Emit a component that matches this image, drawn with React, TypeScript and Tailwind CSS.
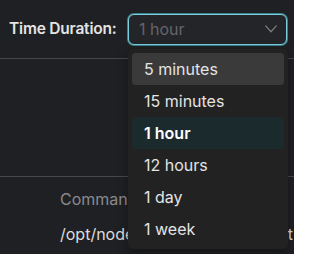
const options = ["5 minutes", "15 minutes", "1 hour", "12 hours", "1 day", "1 week"];

export default function App() {
    const font = { fontFamily: "Inter, 'Noto Sans', sans-serif" };
    return (
        <div className="relative w-[294px] h-[254px] overflow-hidden bg-[#1f2023] text-[#e2e2e2]" style={font}>
            <div className="flex items-center h-[59px] pl-[9px] gap-[9px] border-b border-[#48484b]">
                <span className="w-[110px] text-[15.5px] tracking-[-0.2px] font-semibold text-[#e4e4e4] whitespace-nowrap">Time Duration:</span>
                <div className="flex items-center justify-between w-[159px] h-[31px] rounded-[6px] border-[1.5px] border-[#7ccfde] shadow-[0_0_0_1px_#3c7e8a] bg-[#242528] pl-[10px] pr-[9px]">
                    <span className="text-[16px] text-[#656569]">1 hour</span>
                    <svg width="12" height="8" viewBox="0 0 12 8" fill="none" stroke="#7a7a7e" strokeWidth="1.3" strokeLinecap="round" strokeLinejoin="round">
                        <polyline points="0.7,0.9 6,6.7 11.3,0.9" />
                    </svg>
                </div>
            </div>
            <div className="h-[118px] border-b border-[#48484b]" />
            <div className="pl-[60px] pr-[1px] pt-[10px] flex flex-col gap-[11px] text-[16px]">
                <div className="text-[#8a8a8e]">Command</div>
                <div className="flex justify-between text-[#dcdcdc]">
                    <span>/opt/node</span>
                    <span>t</span>
                </div>
            </div>

            <div className="absolute left-[128px] top-[49px] w-[160px] p-[4px] rounded-[6px] bg-[#222223] shadow-[0_4px_12px_rgba(0,0,0,0.35)]">
                {options.map((o, i) => (
                    <div
                        key={o}
                        className={`h-[32px] flex items-center px-[12px] rounded-[4px] text-[16px] ${i === 0 ? "bg-[#3a3a3b] text-[#e4e4e4]" : i === 2 ? "bg-[#1b2a2c] font-semibold text-white" : "text-[#e4e4e4]"}`}
                    >
                        {o}
                    </div>
                ))}
            </div>
        </div>
    );
}
